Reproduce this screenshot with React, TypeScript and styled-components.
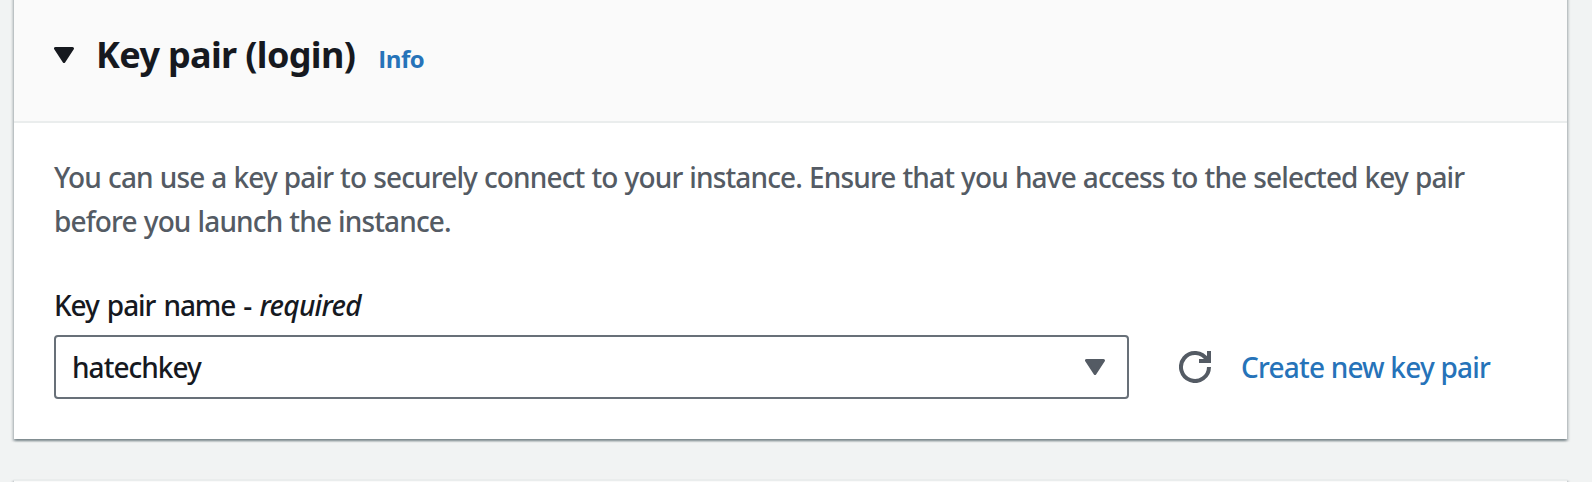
import React from "react";
import styled, { createGlobalStyle } from "styled-components";

const GlobalStyle = createGlobalStyle`
  * { box-sizing: border-box; }
  body {
    margin: 0;
    background: #f1f3f3;
    color: #16191f;
    font-family: "Noto Sans", "Open Sans", sans-serif;
    font-size: 28px;
    overflow: hidden;
  }
`;

const Page = styled.main`
  display: flex;
  flex-direction: column;
  gap: 40px;
  height: 482px;
  padding: 0 25px 0 14px;
  overflow: hidden;
`;

const Panel = styled.section`
  flex: none;
  background: #fff;
  box-shadow: 0 2px 2px 0 rgba(0, 28, 36, 0.3), 2px 2px 2px 0 rgba(0, 28, 36, 0.15),
    -2px 2px 2px 0 rgba(0, 28, 36, 0.15);
`;

const KeyPairPanel = styled(Panel)`
  margin-top: -9px;
`;

const NextPanel = styled(Panel)`
  height: 80px;
  border-top: 2px solid #eaeded;
  background: #fafafa;
`;

const Header = styled.header`
  display: flex;
  align-items: baseline;
  height: 132px;
  padding: 40px 40px 0;
  background: #fafafa;
  border-bottom: 2px solid #eaeded;
`;

const Title = styled.h2`
  margin: 0 0 0 22px;
  font-size: 36px;
  line-height: 48px;
  font-weight: 700;
  letter-spacing: -0.65px;
  white-space: nowrap;
`;

const Link = styled.a`
  color: #2673b9;
  font-weight: 500;
  letter-spacing: -0.8px;
  line-height: 44px;
  margin-left: 30px;
  white-space: nowrap;
`;

const InfoLink = styled(Link)`
  font-family: "Open Sans", sans-serif;
  font-size: 24px;
  font-weight: 700;
  letter-spacing: -0.5px;
  margin-left: 23px;
`;

const Body = styled.div`
  height: 316px;
  padding: 32px 40px 0;
`;

const Description = styled.p`
  margin: 0;
  color: #545b64;
  font-weight: 500;
  line-height: 44px;
  letter-spacing: -0.86px;
  word-spacing: 0.55px;
  white-space: nowrap;
`;

const Label = styled.label`
  display: block;
  margin-top: 40px;
  font-weight: 500;
  line-height: 44px;
  letter-spacing: -1.1px;
  word-spacing: 2px;
  white-space: nowrap;
`;

const Required = styled.i`
  letter-spacing: -0.7px;
`;

const FieldRow = styled.div`
  display: flex;
  align-items: center;
  margin-top: 8px;
`;

const Select = styled.div`
  display: flex;
  align-items: center;
  justify-content: space-between;
  width: 1075px;
  height: 64px;
  padding: 0 22px 0 16px;
  border: 2px solid #687078;
  border-radius: 4px;
  font-weight: 500;
  letter-spacing: -0.97px;
`;

const Refresh = styled.button`
  display: flex;
  margin: 0 0 0 50px;
  padding: 0;
  border: 0;
  background: none;
  color: #545b64;
`;

const CaretSvg = styled.svg<{ $heading?: boolean }>`
  flex: none;
  align-self: ${(p) => (p.$heading ? "flex-start" : "center")};
  margin-top: ${(p) => (p.$heading ? 16 : 0)}px;
  color: ${(p) => (p.$heading ? "#16191f" : "#545b64")};
`;

const Caret = ({ heading }: { heading?: boolean }) => (
  <CaretSvg $heading={heading} width="20" height="16" viewBox="0 0 20 16">
    <path d="M1.5 1.5h17L10 14.5z" fill="currentColor" stroke="currentColor" strokeWidth="3" strokeLinejoin="round" />
  </CaretSvg>
);

const RefreshIcon = () => (
  <svg width="32" height="32" viewBox="0 0 32 32" fill="none" stroke="currentColor" strokeWidth="4">
    <path d="M30 16A14 14 0 1 1 28 8.8" />
    <path d="M20 10h10V0" />
  </svg>
);

export default function App() {
  return (
    <>
      <GlobalStyle />
      <Page>
        <KeyPairPanel>
          <Header>
            <Caret heading />
            <Title>Key pair (login)</Title>
            <InfoLink>Info</InfoLink>
          </Header>
          <Body>
            <Description>
              You can use a key pair to securely connect to your instance. Ensure that you have access to the selected key pair
              <br />
              before you launch the instance.
            </Description>
            <Label>
              Key pair name - <Required>required</Required>
            </Label>
            <FieldRow>
              <Select>
                hatechkey
                <Caret />
              </Select>
              <Refresh aria-label="Refresh">
                <RefreshIcon />
              </Refresh>
              <Link>Create new key pair</Link>
            </FieldRow>
          </Body>
        </KeyPairPanel>
        <NextPanel />
      </Page>
    </>
  );
}
